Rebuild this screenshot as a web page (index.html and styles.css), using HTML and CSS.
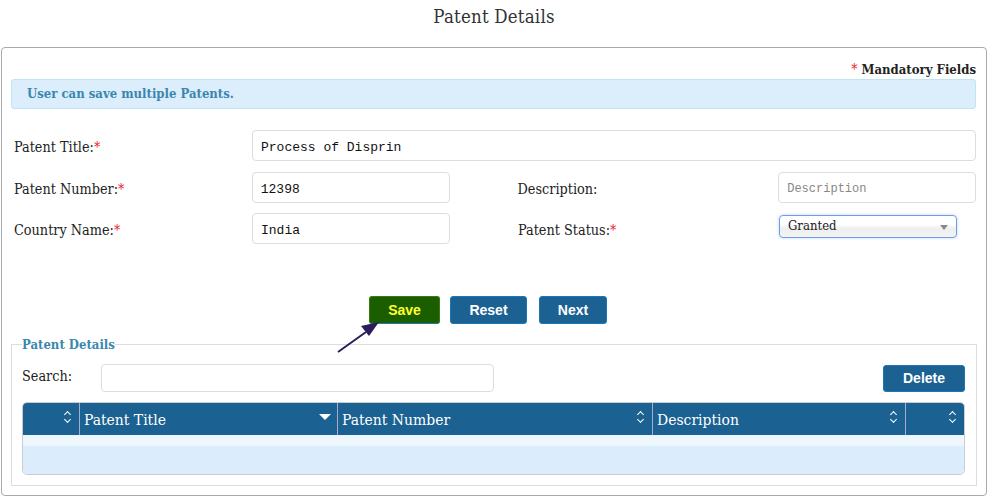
FILE: index.html
```html
<!DOCTYPE html>
<html>
<head>
<meta charset="utf-8">
<link rel="stylesheet" href="styles.css">
</head>
<body>
<h1 class="page-title">Patent Details</h1>
<div class="panel">
  <div class="mandatory"><span class="req">*</span> Mandatory Fields</div>
  <div class="info">User can save multiple Patents.</div>
  <div class="form">
    <div class="row">
      <label class="lbl lbl-first">Patent Title:<span class="req">*</span></label>
      <div class="input wide">Process of Disprin</div>
    </div>
    <div class="row">
      <label class="lbl lbl-first">Patent Number:<span class="req">*</span></label>
      <div class="input short">12398</div>
      <label class="lbl lbl-second">Description:</label>
      <div class="input short placeholder">Description</div>
    </div>
    <div class="row">
      <label class="lbl lbl-first">Country Name:<span class="req">*</span></label>
      <div class="input short">India</div>
      <label class="lbl lbl-second">Patent Status:<span class="req">*</span></label>
      <div class="select">Granted<span class="caret"></span></div>
    </div>
  </div>
  <div class="buttons">
    <button class="btn btn-save">Save</button>
    <button class="btn btn-reset">Reset</button>
    <button class="btn btn-next">Next</button>
  </div>
  <fieldset class="details">
    <legend>Patent Details</legend>
    <div class="search-row">
      <label class="search-lbl">Search:</label>
      <div class="search-input"></div>
      <button class="btn btn-delete">Delete</button>
    </div>
    <div class="table">
      <div class="thead">
        <div class="th c1"><span class="sort"></span></div>
        <div class="th c2">Patent Title<span class="sorted"></span></div>
        <div class="th c3">Patent Number<span class="sort"></span></div>
        <div class="th c4">Description<span class="sort"></span></div>
        <div class="th c5"><span class="sort"></span></div>
      </div>
      <div class="tbody"></div>
    </div>
  </fieldset>
  <svg class="arrow" width="60" height="50" viewBox="0 0 60 50">
    <line x1="4" y1="45" x2="32" y2="25" stroke="#2b1d5c" stroke-width="2"/>
    <polygon points="45,15 27,19 35,29" fill="#2b1d5c"/>
  </svg>
</div>
</body>
</html>
```
FILE: styles.css
```css
* { box-sizing: border-box; }
body {
  margin: 0;
  font-family: "DejaVu Serif Condensed", "DejaVu Serif", serif;
  color: #222;
  background: #fff;
  width: 988px;
  height: 496px;
  overflow: hidden;
}
.page-title {
  margin: 0;
  height: 47px;
  padding-top: 6px;
  text-align: center;
  font-weight: normal;
  font-size: 18.5px;
  color: #333;
  letter-spacing: 0.2px;
}
.panel {
  position: relative;
  margin-left: 1px;
  width: 986px;
  height: 449px;
  border: 1px solid #a9a9a9;
  border-radius: 4px;
  padding: 12px 10px 0 9px;
}
.mandatory {
  text-align: right;
  font-weight: bold;
  font-size: 13px;
  height: 19px;
  line-height: 19px;
}
.req { color: #e8262a; font-weight: normal; font-size: 14px; }
.info {
  height: 30px;
  background: #dcedfc;
  border: 1px solid #bfe5f4;
  border-radius: 3px;
  color: #3a87ad;
  font-weight: bold;
  font-size: 13px;
  line-height: 28px;
  padding-left: 15px;
}
.form { padding-top: 21px; }
.row {
  display: flex;
  align-items: center;
  height: 31px;
  margin-bottom: 10.5px;
}
.lbl {
  font-size: 14.3px;
  color: #222;
  padding-top: 3px;
}
.lbl-first { width: 241px; padding-left: 3px; }
.lbl-second { width: 261px; margin-left: 68px; }
.input {
  height: 31px;
  border: 1px solid #ddd;
  border-radius: 4px;
  font-family: "Liberation Mono", monospace;
  font-size: 13px;
  line-height: 29px;
  padding-left: 8px;
  padding-top: 2px;
  color: #111;
}
.wide { flex: 1; }
.short { width: 198px; }
.placeholder { color: #888; font-size: 12px; }
.select {
  position: relative;
  width: 178px;
  height: 23px;
  border: 1px solid #6b9ef0;
  border-radius: 4px;
  box-shadow: 0 0 3px rgba(120,160,230,0.5);
  background: linear-gradient(#fff 0%, #fff 40%, #eee 60%, #f4f4f4 100%);
  font-size: 13px;
  line-height: 20px;
  padding-left: 8px;
  margin-top: -4px;
  color: #222;
}
.caret {
  position: absolute;
  right: 8px;
  top: 9px;
  border-left: 4px solid transparent;
  border-right: 4px solid transparent;
  border-top: 5px solid #888;
}
.buttons {
  display: flex;
  margin-top: 52px;
  padding-left: 358px;
  height: 28px;
}
.btn {
  font-family: "Liberation Sans", Arial, sans-serif;
  font-weight: bold;
  font-size: 14px;
  color: #fff;
  background: #1b6191;
  border: 1px solid #1d76b8;
  border-radius: 3px;
  height: 28px;
  padding: 0;
  cursor: pointer;
}
.btn-save { width: 71px; background: #1a5e00; color: #ffff33; border-color: #3a7a10; border-bottom-color: #1d76b8; }
.btn-reset { width: 77px; margin-left: 10px; }
.btn-next { width: 68px; margin-left: 12px; }
.details {
  margin: 13px 0 0 0;
  width: 966px;
  border: 1px solid #ddd;
  padding: 0 10px 10px 10px;
}
.details legend {
  font-weight: bold;
  font-size: 13px;
  color: #3a87ad;
  padding: 0;
  margin-left: 0;
}
.search-row {
  display: flex;
  align-items: center;
  margin-top: 12px;
  height: 28px;
}
.search-lbl { font-size: 14.3px; width: 79px; margin-top: -4px; }
.search-input {
  width: 393px;
  height: 28px;
  border: 1px solid #ddd;
  border-radius: 4px;
}
.btn-delete { width: 82px; height: 27px; margin-left: auto; margin-right: 1px; }
.table {
  margin-top: 10px;
  border: 1px solid #ccc;
  border-radius: 5px;
  overflow: hidden;
  width: 943px;
}
.thead {
  display: flex;
  height: 32px;
  background: #1b6191;
}
.th {
  position: relative;
  color: #fff;
  font-size: 15.5px;
  line-height: 35px;
  padding-left: 4px;
  border-right: 1px solid #aac;
}
.th:last-child { border-right: none; }
.c1 { width: 57px; }
.c2 { width: 258px; }
.c3 { width: 315px; }
.c4 { width: 253px; }
.c5 { flex: 1; }
.sort::before, .sort::after {
  content: "";
  position: absolute;
  right: 9px;
  width: 4px;
  height: 4px;
  border-left: 1.5px solid #fff;
  border-top: 1.5px solid #fff;
}
.sort::before { top: 9px; transform: rotate(45deg); }
.sort::after { top: 14px; transform: rotate(225deg); }
.sorted {
  position: absolute;
  right: 6px;
  top: 11px;
  border-left: 6px solid transparent;
  border-right: 6px solid transparent;
  border-top: 6px solid #fff;
}
.tbody {
  height: 39px;
  background: linear-gradient(#eef7fe 0px, #eef7fe 10px, #dbedfc 12px, #dbedfc 100%);
}
.arrow {
  position: absolute;
  left: 332px;
  top: 259px;
}
```
